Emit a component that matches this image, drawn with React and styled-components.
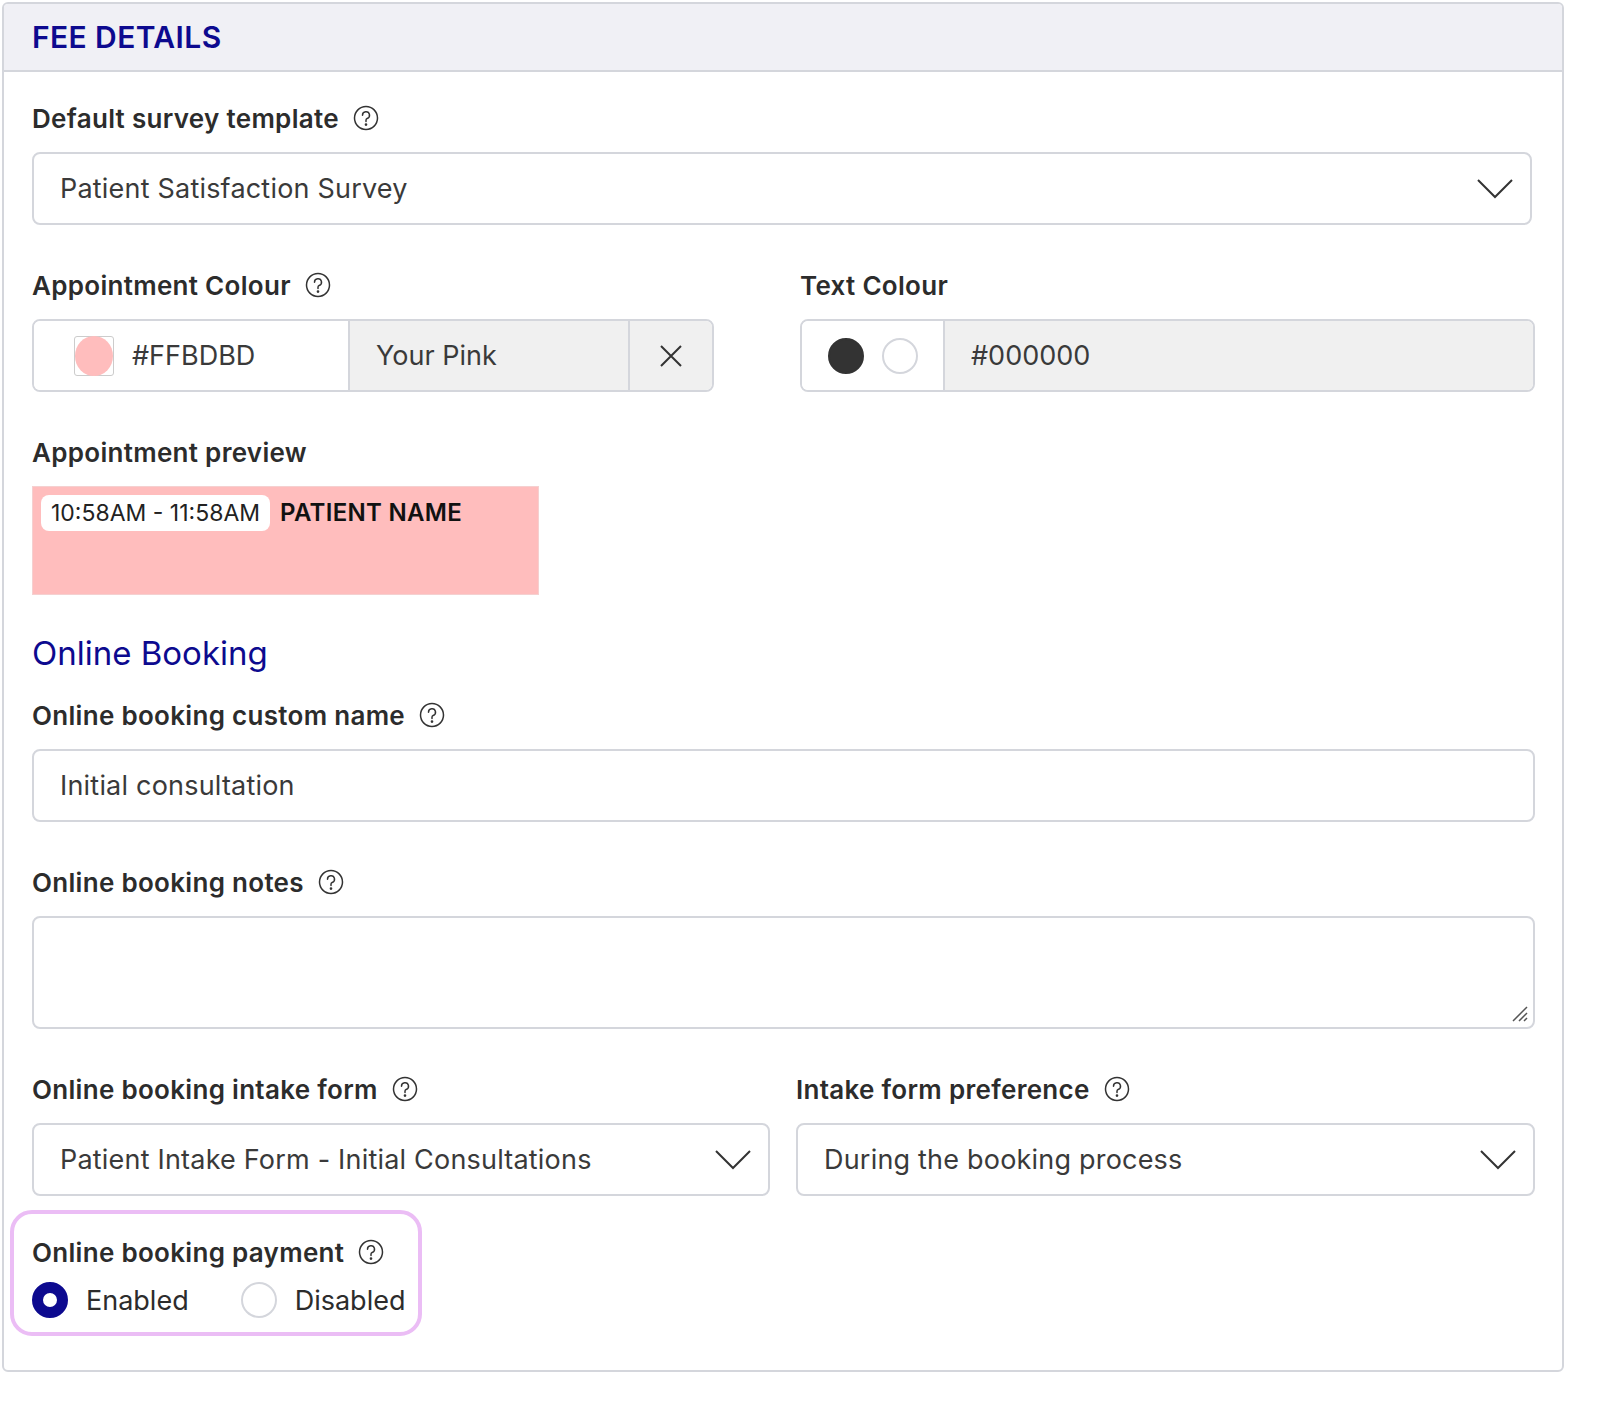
import React from "react";
import styled, { createGlobalStyle } from "styled-components";

const Global = createGlobalStyle`
  body { margin: 0; padding: 2px; background: #fff; font-family: "Inter", "Open Sans", sans-serif; color: #333; }
  * { box-sizing: border-box; }
`;
const navy = "#0d0a8f";

const Card = styled.div`
  width: 1562px; height: 1370px;
  border: 2px solid #d4d6dc; border-radius: 6px; overflow: hidden;
`;
const Header = styled.div`
  height: 68px; background: #f0f0f5; border-bottom: 2px solid #d4d6dc;
  display: flex; align-items: center; padding-left: 28px;
  font-size: 30px; font-weight: 600; color: ${navy}; letter-spacing: 0.4px;
`;
const Body = styled.div`
  padding: 26px 27px 0 28px; display: flex; flex-direction: column;
`;
const Label = styled.div`
  display: flex; align-items: center; gap: 14px; height: 40px;
  font-size: 26px; font-weight: 600; color: #2c2c2c; letter-spacing: 0.3px;
  margin-bottom: ${p => p.$mb ?? 14}px;
`;
const Help = () => (
  <svg width="26" height="26" viewBox="0 0 26 26" fill="none" stroke="#333" strokeWidth="1.5">
    <circle cx="13" cy="13" r="11.5" />
    <path d="M9.5 10.2a3.5 3.5 0 1 1 4.6 3.3c-.8.3-1.1.9-1.1 1.7v1.3" strokeLinecap="round" />
    <circle cx="13" cy="19.6" r="0.6" fill="#333" />
  </svg>
);
const Field = styled.div`
  width: ${p => p.$w || "100%"}; height: ${p => p.$h || 73}px;
  border: 2px solid #d4d6dc; border-radius: 8px; background: #fff;
  display: flex; align-items: center; justify-content: space-between;
  padding: 0 16px 0 26px; font-size: 27px; color: #3a3a3a; position: relative; letter-spacing: 0.2px;
  margin-bottom: ${p => p.$mb ?? 40}px;
`;
const Chevron = () => (
  <svg width="38" height="22" viewBox="0 0 38 22" fill="none" stroke="#333" strokeWidth="2">
    <path d="M2 2l17 17L36 2" />
  </svg>
);
const Row = styled.div` display: flex; justify-content: space-between; `;
const Col = styled.div` width: ${p => p.$w}px; display: flex; flex-direction: column; `;
const Group = styled.div`
  height: 73px; display: flex; border: 2px solid #d4d6dc; border-radius: 8px;
  overflow: hidden; margin-bottom: 40px; font-size: 27px; color: #3a3a3a;
`;
const Seg = styled.div`
  display: flex; align-items: center; gap: ${p => p.$gap || 0}px;
  width: ${p => p.$w ? p.$w + "px" : "auto"}; flex: ${p => p.$w ? "none" : 1};
  background: ${p => p.$grey ? "#f0f0f0" : "#fff"};
  padding-left: ${p => p.$center ? 0 : (p.$pl ?? 26)}px; justify-content: ${p => p.$center ? "center" : "flex-start"};
  border-right: ${p => p.$divider ? "2px solid #d4d6dc" : "none"};
`;
const Swatch = styled.div`
  width: 40px; height: 40px; border: 1px solid #ccc; border-radius: 3px; display: flex; align-items: center; justify-content: center;
  &::after { content: ""; width: 38px; height: 40px; border-radius: 50%; background: #ffbdbd; }
`;
const Dot = styled.div`
  width: 36px; height: 36px; border-radius: 50%;
  background: ${p => p.$fill || "#fff"}; border: 2px solid ${p => p.$fill || "#d4d6dc"};
`;
const Preview = styled.div`
  width: 507px; height: 109px; background: #ffbdbd; padding: 8px;
  display: flex; align-items: flex-start; gap: 10px; margin-bottom: 38px; border: 1px solid #f5d0d0;
`;
const Pill = styled.div` background: #fff; border-radius: 8px; padding: 4px 10px; font-size: 23px; color: #222; `;
const PName = styled.div` font-size: 24px; font-weight: 600; color: #111; padding-top: 3px; letter-spacing: 0.3px; `;
const Section = styled.div` font-size: 33px; color: ${navy}; margin-bottom: 20px; height: 42px; `;
const Highlight = styled.div`
  margin-left: -22px; width: 412px; border: 4px solid #ebbdf5; border-radius: 22px;
  padding: 18px 14px 14px 18px;
`;
const Radios = styled.div` display: flex; align-items: center; gap: 52px; font-size: 27px; color: #2c2c2c; margin-top: 4px; `;
const Radio = styled.div` display: flex; align-items: center; gap: 18px; `;
const RadioDot = styled.div`
  width: 36px; height: 36px; border-radius: 50%;
  border: ${p => p.$on ? `11px solid ${navy}` : "2px solid #d4d6dc"}; background: #fff;
`;
const Grip = styled.svg` position: absolute; right: 4px; bottom: 4px; `;

export default function App() {
  return (
    <>
      <Global />
      <Card>
        <Header>FEE DETAILS</Header>
        <Body>
          <Label>Default survey template <Help /></Label>
          <Field $w="1500px">Patient Satisfaction Survey <Chevron /></Field>
          <Row>
            <Col $w={682}>
              <Label>Appointment Colour <Help /></Label>
              <Group>
                <Seg $w={316} $pl={40} $gap={18} $divider><Swatch />#FFBDBD</Seg>
                <Seg $w={280} $grey $divider>Your Pink</Seg>
                <Seg $grey $center>
                  <svg width="24" height="24" viewBox="0 0 24 24" stroke="#333" strokeWidth="2"><path d="M2 2l20 20M22 2L2 22" /></svg>
                </Seg>
              </Group>
            </Col>
            <Col $w={735}>
              <Label>Text Colour</Label>
              <Group>
                <Seg $w={143} $pl={26} $gap={18} $divider><Dot $fill="#333" /><Dot /></Seg>
                <Seg $grey>#000000</Seg>
              </Group>
            </Col>
          </Row>
          <Label>Appointment preview</Label>
          <Preview><Pill>10:58AM - 11:58AM</Pill><PName>PATIENT NAME</PName></Preview>
          <Section>Online Booking</Section>
          <Label>Online booking custom name <Help /></Label>
          <Field>Initial consultation</Field>
          <Label>Online booking notes <Help /></Label>
          <Field $h={113}>
            <Grip width="20" height="20" viewBox="0 0 20 20" stroke="#555" strokeWidth="1.5"><path d="M18 4L4 18M18 10l-8 8M18 15l-3 3" /></Grip>
          </Field>
          <Row>
            <Col $w={738}>
              <Label>Online booking intake form <Help /></Label>
              <Field $mb={14}>Patient Intake Form - Initial Consultations <Chevron /></Field>
            </Col>
            <Col $w={739}>
              <Label>Intake form preference <Help /></Label>
              <Field $mb={14}>During the booking process <Chevron /></Field>
            </Col>
          </Row>
          <Highlight>
            <Label $mb={10}>Online booking payment <Help /></Label>
            <Radios>
              <Radio><RadioDot $on />Enabled</Radio>
              <Radio><RadioDot />Disabled</Radio>
            </Radios>
          </Highlight>
        </Body>
      </Card>
    </>
  );
}
